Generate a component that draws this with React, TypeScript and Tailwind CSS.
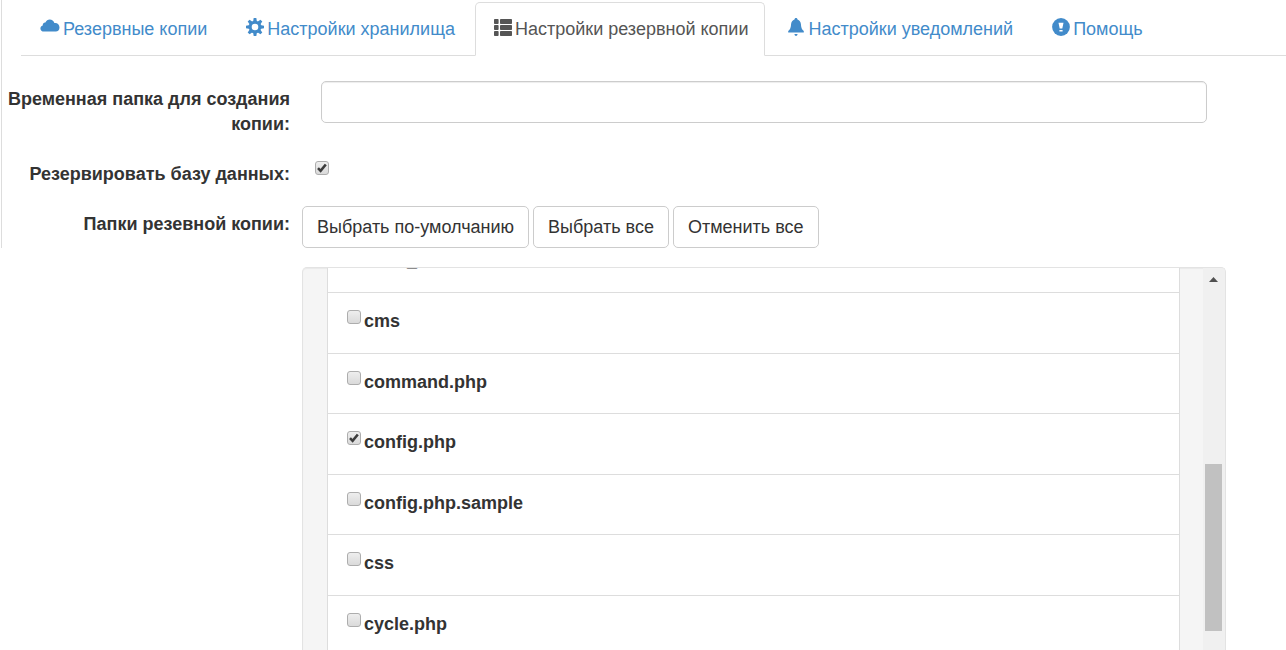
import { useState } from 'react';
import type { ReactNode } from 'react';

type TabId = 'backups' | 'storage' | 'backup' | 'notify' | 'help';

interface FolderItem {
  name: string;
  checked: boolean;
}

interface CheckboxProps {
  id: string;
  checked: boolean;
  onChange: () => void;
}

function CloudIcon() {
  return (
    <svg className="h-[18px] w-5" viewBox="0 0 20 18" fill="currentColor" aria-hidden="true">
      <path d="M4 13.500C1.900 13.500.4 12.300.4 10.400c0-1.500 1-2.700 2.300-3C2.800 5.200 4.100 4.300 5.400 4.500 6.300 2.700 7.900 1.600 9.700 1.600c2.300 0 4 1.300 4.700 3.400 2.900-.500 5.100 1.700 5.100 4.400 0 2.500-1.600 4.100-3.700 4.100z" />
    </svg>
  );
}

function CogIcon() {
  return (
    <svg className="size-[18px]" viewBox="0 0 18 18" aria-hidden="true">
      <g fill="currentColor">
        {[0, 45, 90, 135].map((angle) => (
          <path key={angle} d="M7.700 0h2.600l.7 4v10l-.7 4H7.700L7 14V4z" transform={`rotate(${angle} 9 9)`} />
        ))}
      </g>
      <circle cx="9" cy="9" r="4.800" fill="white" stroke="currentColor" strokeWidth="3" />
    </svg>
  );
}

function ListIcon() {
  return (
    <svg className="size-[18px]" viewBox="0 0 18 18" fill="currentColor" aria-hidden="true">
      {[1, 7, 13].map((y) => (
        <g key={y}>
          <rect x="0" y={y} width="4.600" height="5" rx="0.8" />
          <rect x="6" y={y} width="12" height="5" rx="0.8" />
        </g>
      ))}
    </svg>
  );
}

function BellIcon() {
  return (
    <svg className="size-[18px]" viewBox="0 0 18 18" fill="currentColor" aria-hidden="true">
      <path d="M9 0c.9 0 1.500.600 1.500 1.500 2 .600 3.200 2.300 3.400 4.500.2 3.600.8 5.300 2.900 7v1.600H1.200V13c2.100-1.700 2.700-3.400 2.900-7 .2-2.200 1.400-3.900 3.400-4.500C7.500.600 8.100 0 9 0z" />
      <path d="M7.400 16h3.200c-.2 1.200-.8 2-1.600 2s-1.400-.8-1.600-2z" />
    </svg>
  );
}

function HelpIcon() {
  return (
    <svg className="size-[18px]" viewBox="0 0 18 18" aria-hidden="true">
      <circle cx="9" cy="9" r="8.900" fill="currentColor" />
      <path d="M6.500 4.800h5L10.300 10.500H7.700z M7.400 12h3.200v1.500H7.400z" fill="white" />
    </svg>
  );
}

const tabs: Array<{ id: TabId; label: string; icon: ReactNode }> = [
  { id: 'backups', label: 'Резервные копии', icon: <CloudIcon /> },
  { id: 'storage', label: 'Настройки хранилища', icon: <CogIcon /> },
  { id: 'backup', label: 'Настройки резервной копии', icon: <ListIcon /> },
  { id: 'notify', label: 'Настройки уведомлений', icon: <BellIcon /> },
  { id: 'help', label: 'Помощь', icon: <HelpIcon /> },
];

const initialFolders: FolderItem[] = [
  { name: 'build_', checked: false },
  { name: 'cms', checked: false },
  { name: 'command.php', checked: false },
  { name: 'config.php', checked: true },
  { name: 'config.php.sample', checked: false },
  { name: 'css', checked: false },
  { name: 'cycle.php', checked: false },
];

const defaultFolders = ['config.php'];

const buttonClass =
  'h-[42px] rounded-[5px] border border-[#ccc] bg-white px-[14px] hover:bg-[#e6e6e6]';

function Checkbox({ id, checked, onChange }: CheckboxProps) {
  return (
    <span className="relative block size-[14px] shrink-0">
      <input
        id={id}
        type="checkbox"
        checked={checked}
        onChange={onChange}
        className="block size-[14px] appearance-none rounded-[3px] border border-[#adadad] bg-linear-to-b from-[#eeeeee] to-[#dadada]"
      />
      {checked ? (
        <svg className="pointer-events-none absolute inset-0 size-[14px]" viewBox="0 0 14 14" fill="none" aria-hidden="true">
          <path d="M3 7.200l2.600 2.600 5.200-6.300" stroke="#3c3c3c" strokeWidth="2.600" />
        </svg>
      ) : null}
    </span>
  );
}

export default function App() {
  const [activeTab, setActiveTab] = useState<TabId>('backup');
  const [tempFolder, setTempFolder] = useState('');
  const [backupDb, setBackupDb] = useState(true);
  const [folders, setFolders] = useState(initialFolders);

  const selectFolders = (isSelected: (name: string) => boolean) => {
    setFolders(folders.map((item) => ({ ...item, checked: isSelected(item.name) })));
  };

  const toggleFolder = (name: string) => {
    setFolders(
      folders.map((item) => (item.name === name ? { ...item, checked: !item.checked } : item)),
    );
  };

  return (
    <div className="flex h-screen flex-col overflow-hidden bg-white font-['Liberation_Sans',Arial,sans-serif] text-[18px] leading-[25px] text-[#333]">
      <div className="ml-px border-l border-[#ddd]">
        <nav className="ml-[19px] flex gap-[3px] border-b border-[#ddd] pt-[2px]">
          {tabs.map((tab) => (
            <a
              key={tab.id}
              href={`#${tab.id}`}
              onClick={() => setActiveTab(tab.id)}
              className={`-mb-px flex gap-[3px] rounded-t-[5px] border pt-[14px] pr-4 pb-[13px] pl-[18px] whitespace-nowrap ${
                activeTab === tab.id
                  ? 'border-[#ddd] border-b-white bg-white text-[#555]'
                  : 'border-transparent text-[#428bca]'
              }`}
            >
              <span className="pt-px">{tab.icon}</span>
              {tab.label}
            </a>
          ))}
        </nav>

        <form className="mt-[25px] flex flex-col gap-[19px]" onSubmit={(event) => event.preventDefault()}>
          <div className="flex">
            <label htmlFor="temp-folder" className="w-72 shrink-0 pt-[6px] text-right font-bold">
              Временная папка для создания копии:
            </label>
            <input
              id="temp-folder"
              type="text"
              value={tempFolder}
              onChange={(event) => setTempFolder(event.target.value)}
              className="mr-[79px] ml-[31px] h-[42px] min-w-0 flex-1 rounded-[5px] border border-[#ccc] px-4 shadow-[inset_0_1px_1px_rgba(0,0,0,0.075)]"
            />
          </div>

          <div className="flex">
            <label htmlFor="backup-db" className="w-72 shrink-0 pt-[6px] text-right font-bold">
              Резервировать базу данных:
            </label>
            <div className="ml-[25px] pt-[5px]">
              <Checkbox id="backup-db" checked={backupDb} onChange={() => setBackupDb(!backupDb)} />
            </div>
          </div>

          <div className="flex">
            <div className="w-72 shrink-0 pt-[6px] text-right font-bold">Папки резевной копии:</div>
            <div className="ml-3 flex gap-1">
              <button
                type="button"
                className={buttonClass}
                onClick={() => selectFolders((name) => defaultFolders.includes(name))}
              >
                Выбрать по-умолчанию
              </button>
              <button type="button" className={buttonClass} onClick={() => selectFolders(() => true)}>
                Выбрать все
              </button>
              <button type="button" className={buttonClass} onClick={() => selectFolders(() => false)}>
                Отменить все
              </button>
            </div>
          </div>
        </form>
      </div>

      <div className="mt-[19px] mr-[60px] ml-[302px] flex min-h-0 flex-1 overflow-hidden rounded-t-[5px] border border-b-0 border-[#e3e3e3] bg-[#f5f5f5] pl-6 shadow-[inset_0_1px_1px_rgba(0,0,0,0.05)]">
        {/* the list is scrolled: its first row is cut by the top edge */}
        <ul className="-mt-[35px] min-w-0 flex-1 self-start border-x border-[#ddd] bg-white">
          {folders.map((item) => (
            <li
              key={item.name}
              className="flex gap-[3px] border-b border-[#ddd] pt-4 pl-[19px] odd:h-[60px] even:h-[61px]"
            >
              <div className="pt-px">
                <Checkbox
                  id={`folder-${item.name}`}
                  checked={item.checked}
                  onChange={() => toggleFolder(item.name)}
                />
              </div>
              <label htmlFor={`folder-${item.name}`} className="font-bold">
                {item.name}
              </label>
            </li>
          ))}
        </ul>
        <div className="ml-[23px] w-[22px] shrink-0 bg-[#f0f0f0]">
          <svg className="mt-[9px] ml-[6px] h-[5px] w-[9px]" viewBox="0 0 9 5" fill="#505050" aria-hidden="true">
            <path d="M4.500 0L9 5H0z" />
          </svg>
          <div className="mt-[182px] ml-[2px] h-[167px] w-[17px] bg-[#c1c1c1]" />
        </div>
      </div>
    </div>
  );
}
